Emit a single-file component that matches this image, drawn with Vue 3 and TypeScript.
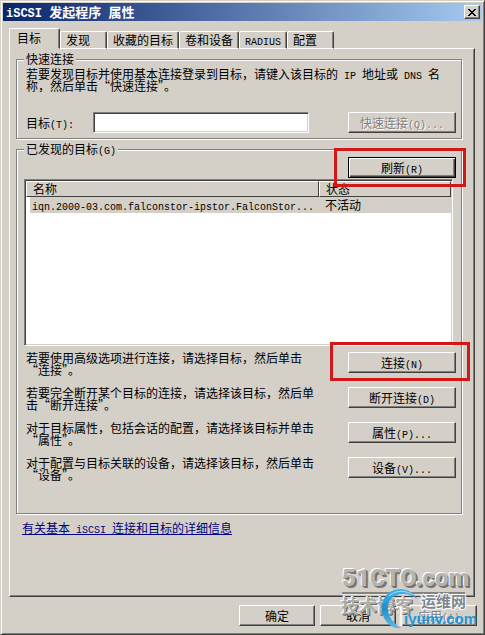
<script setup lang="ts">
import { h, ref, type FunctionalComponent } from 'vue'

interface Action {
  text: string
  label: string
  marked?: boolean
}

// Splits mixed text so that Latin runs get the half-width face.
const Tx: FunctionalComponent<{ t: string }> = (props) =>
  props.t
    .split(/([ -~]+)/)
    .filter((part) => part.length > 0)
    .map((part) => (/^[ -~]/.test(part) ? h('span', { class: 'latin' }, part) : part))
Tx.props = ['t']

const tabs = ['目标', '发现', '收藏的目标', '卷和设备', 'RADIUS', '配置']
const active = ref(0)
const target = ref('')

const targets = [
  { name: 'iqn.2000-03.com.falconstor-ipstor.FalconStor...', state: '不活动' },
]

const actions: Action[] = [
  { text: '若要使用高级选项进行连接，请选择目标，然后单击\n“连接”。', label: '连接(N)', marked: true },
  { text: '若要完全断开某个目标的连接，请选择该目标，然后单\n击“断开连接”。', label: '断开连接(D)' },
  { text: '对于目标属性，包括会话的配置，请选择该目标并单击\n“属性”。', label: '属性(P)...' },
  { text: '对于配置与目标关联的设备，请选择该目标，然后单击\n“设备”。', label: '设备(V)...' },
]
</script>

<template>
  <main class="window" lang="zh-CN">
    <header class="title">
      <h1><Tx t="iSCSI 发起程序 属性" /></h1>
      <button class="close" type="button" aria-label="关闭">
        <svg width="8" height="7" viewBox="0 0 8 7" shape-rendering="crispEdges">
          <path d="M0 0h2v1h1v1h2v-1h1v-1h2v1h-1v1h-1v1h-1v1h1v1h1v1h1v1h-2v-1h-1v-1h-2v1h-1v1h-2v-1h1v-1h1v-1h1v-1h-1v-1h-1v-1h-1z" />
        </svg>
      </button>
    </header>

    <nav class="tabs" role="tablist">
      <button
        v-for="(tab, i) in tabs"
        :key="tab"
        type="button"
        role="tab"
        class="tab"
        :class="{ on: active === i }"
        :aria-selected="active === i"
        @click="active = i"
      ><Tx :t="tab" /></button>
    </nav>

    <section class="panel">
      <fieldset class="group quick">
        <legend>快速连接</legend>
        <p class="note"><Tx :t="'若要发现目标并使用基本连接登录到目标，请键入该目标的 IP 地址或 DNS 名\n称，然后单击“快速连接”。'" /></p>
        <div class="field">
          <label for="target"><Tx t="目标(T):" /></label>
          <input id="target" v-model="target" type="text" />
          <button class="btn wide" type="button" disabled><Tx t="快速连接(Q)..." /></button>
        </div>
      </fieldset>

      <fieldset class="group found">
        <legend><Tx t="已发现的目标(G)" /></legend>
        <div class="refresh">
          <span class="mark mark-refresh">
            <button class="btn wide default" type="button"><Tx t="刷新(R)" /></button>
          </span>
        </div>
        <div class="list">
          <table>
            <thead>
              <tr><th class="name">名称</th><th>状态</th></tr>
            </thead>
            <tbody>
              <tr v-for="row in targets" :key="row.name">
                <td><Tx :t="row.name" /></td>
                <td>{{ row.state }}</td>
              </tr>
            </tbody>
          </table>
        </div>
        <div class="actions">
          <div v-for="a in actions" :key="a.label" class="action">
            <p class="note"><Tx :t="a.text" /></p>
            <span :class="{ mark: a.marked, 'mark-connect': a.marked }">
              <button class="btn wide" type="button"><Tx :t="a.label" /></button>
            </span>
          </div>
        </div>
      </fieldset>

      <a class="help" href="#"><Tx t="有关基本 iSCSI 连接和目标的详细信息" /></a>
    </section>

    <footer class="footer">
      <button class="btn" type="button">确定</button>
      <button class="btn" type="button">取消</button>
      <button class="btn" type="button" disabled><Tx t="应用(A)" /></button>
    </footer>

    <svg class="stamp" width="142" height="72" viewBox="0 0 142 72" aria-hidden="true">
      <defs>
        <linearGradient id="ring" x1="0" y1="0" x2="0" y2="1">
          <stop offset="0" stop-color="#45b4ea" />
          <stop offset="0.5" stop-color="#1b8fd3" />
          <stop offset="1" stop-color="#5fbbe8" />
        </linearGradient>
      </defs>
      <text class="cto" x="3" y="26">51CTO.com</text>
      <path d="M3 33H126" stroke="#85837f" stroke-width="2" />
      <path d="M3 35H126" stroke="#fff" stroke-width="1" />
      <text class="blog" x="2" y="53">技术博客</text>
      <path d="M78 39C73 29 60 26 51 32C39 40 40 61 56 68L62 68C52 62 46 52 50 42C54 33 69 31 78 39Z" fill="url(#ring)" />
      <path d="M50 36C58 29 68 31 74 35" fill="none" stroke="#a9dbf5" stroke-width="1" />
      <path d="M62 46V66" fill="none" stroke="#f4f3f0" stroke-width="3" />
      <text class="ops" x="82" y="47">运维网</text>
      <text class="domain" x="65" y="64">iyunv.com</text>
    </svg>
  </main>
</template>

<style>
body {
  background: #d4d0c8;
}
.latin {
  font-family: "Liberation Mono", monospace;
  font-size: 10px;
  line-height: 0;
}
h1 .latin {
  font-size: 12px;
}
</style>

<style scoped>
* {
  box-sizing: border-box;
}
.window {
  position: relative;
  display: flex;
  flex-direction: column;
  min-height: 100vh;
  padding: 2px;
  border: 1px solid #404040;
  border-top-color: #d4d0c8;
  border-left-color: #d4d0c8;
  box-shadow: inset 1px 1px 0 #fff, inset -1px -1px 0 #808080;
  background: #d4d0c8;
  color: #000;
  font: 12px/12px "Noto Sans CJK SC", sans-serif;
}
button,
input {
  font: inherit;
  color: inherit;
}
.title {
  display: flex;
  align-items: center;
  justify-content: space-between;
  height: 18px;
  padding: 0 2px 0 3px;
  background: linear-gradient(90deg, #0a246a, #a6caf0);
}
h1 {
  margin: 0;
  color: #fff;
  font-size: 13px;
  line-height: 16px;
  font-weight: 700;
  white-space: pre;
}
.close {
  display: grid;
  place-items: center;
  width: 16px;
  height: 14px;
  padding: 0;
  border: 1px solid #404040;
  border-top-color: #fff;
  border-left-color: #fff;
  box-shadow: inset -1px -1px 0 #808080;
  background: #d4d0c8;
}
.tabs {
  position: relative;
  display: flex;
  align-items: flex-end;
  height: 28px;
  margin: 0 6px -1px;
}
.tab {
  height: 18px;
  padding: 0 5px;
  border: 1px solid #404040;
  border-top-color: #fff;
  border-left-color: #fff;
  border-bottom-color: #fff;
  border-radius: 2px 2px 0 0;
  box-shadow: inset -1px 0 0 #808080;
  background: #d4d0c8;
  white-space: nowrap;
}
.tab:nth-child(2),
.tab:nth-child(6) {
  padding-right: 16px;
}
.tab.on {
  height: 21px;
  padding: 0 18px 2px 7px;
  border-bottom-color: #d4d0c8;
}
.panel {
  flex: 1;
  margin: 0 7px 0 6px;
  padding: 4px 12px 0 6px;
  border: 1px solid #404040;
  border-top-color: #fff;
  border-left-color: #fff;
  box-shadow: inset -1px -1px 0 #808080;
}
.group {
  min-width: 0;
  margin: 0 0 4px;
  padding: 3px 5px 5px 7px;
  border: 1px solid #808080;
  box-shadow: 1px 1px 0 #fff, inset 1px 1px 0 #fff;
}
.found {
  padding-top: 2px;
  padding-bottom: 32px;
}
legend {
  margin: 0;
  padding: 0 2px;
  background: #d4d0c8;
}
.note {
  margin: 0;
  padding-left: 2px;
  white-space: pre;
}
.field {
  display: flex;
  align-items: center;
  margin-top: 20px;
  padding-left: 2px;
}
.field label {
  width: 67px;
}
.field input {
  flex: 1;
  min-width: 0;
  height: 21px;
  margin-right: 39px;
  padding: 0 4px;
  border: 1px solid #fff;
  border-top-color: #808080;
  border-left-color: #808080;
  border-radius: 0;
  box-shadow: inset 1px 1px 0 #404040, inset -1px -1px 0 #d4d0c8;
  background: #fff;
  outline: 0;
}
.btn {
  display: block;
  width: 76px;
  height: 21px;
  padding: 0;
  border: 1px solid #404040;
  border-top-color: #fff;
  border-left-color: #fff;
  border-radius: 0;
  box-shadow: inset -1px -1px 0 #808080;
  background: #d4d0c8;
  line-height: 18px;
  white-space: pre;
}
.btn.wide {
  width: 108px;
}
.btn.default {
  border-color: #000;
  box-shadow: inset 1px 1px 0 #fff, inset -1px -1px 0 #404040, inset -2px -2px 0 #808080;
}
.btn:disabled {
  color: #808080;
  text-shadow: 1px 1px 0 #fff;
}
.refresh {
  display: flex;
  justify-content: flex-end;
}
.mark {
  position: relative;
}
.mark::after {
  content: "";
  position: absolute;
  border: 3px solid #d01818;
  pointer-events: none;
}
.mark-refresh::after {
  inset: -9px -10px -9px -14px;
}
.mark-connect::after {
  inset: -10px -14px -5px -18px;
}
.list {
  height: 167px;
  margin: 1px 3px 0 0;
  padding: 1px;
  border: 1px solid #fff;
  border-top-color: #808080;
  border-left-color: #808080;
  box-shadow: inset 1px 1px 0 #404040, inset -1px -1px 0 #d4d0c8;
  background: #fff;
}
table {
  width: 100%;
  table-layout: fixed;
  border-spacing: 0;
}
th,
td {
  height: 16px;
  padding: 0 6px;
  font-weight: 400;
  text-align: left;
  white-space: nowrap;
}
th {
  border: 1px solid #404040;
  border-top-color: #fff;
  border-left-color: #fff;
  background: #d4d0c8;
}
.name {
  width: 293px;
}
td {
  background: #d4d0c8;
}
td:first-child {
  border-left: 4px solid #fff;
  padding: 0 2px;
}
.actions {
  display: grid;
  gap: 11px;
  margin-top: 6px;
}
.action {
  display: flex;
  justify-content: space-between;
  height: 24px;
}
.help {
  display: inline-block;
  margin: 4px 0 0 6px;
  color: #000080;
  text-decoration: underline;
  white-space: pre;
}
.footer {
  display: flex;
  justify-content: flex-end;
  gap: 5px;
  padding: 8px 5px 6px 0;
}
.stamp {
  position: absolute;
  right: 3px;
  bottom: 2px;
  pointer-events: none;
}
.cto {
  font: 900 24px Roboto, "Liberation Sans", sans-serif;
  fill: #b7b4ae;
  text-shadow: -1px -1px 0 #fff, 1px 1px 0 #777571, 2px 2px 0 #777571;
}
.blog {
  font: 700 18px "Noto Sans CJK SC", sans-serif;
  fill: #b0ada7;
  text-shadow: -1px -1px 0 #fff, 1px 1px 0 #6a6864;
}
.ops {
  font: 700 15px "Noto Sans CJK SC", sans-serif;
  fill: #7c8791;
  stroke: #fff;
  stroke-width: 2px;
  paint-order: stroke;
}
.domain {
  font: 700 15px "Liberation Sans", sans-serif;
  fill: #2596d6;
}
</style>
